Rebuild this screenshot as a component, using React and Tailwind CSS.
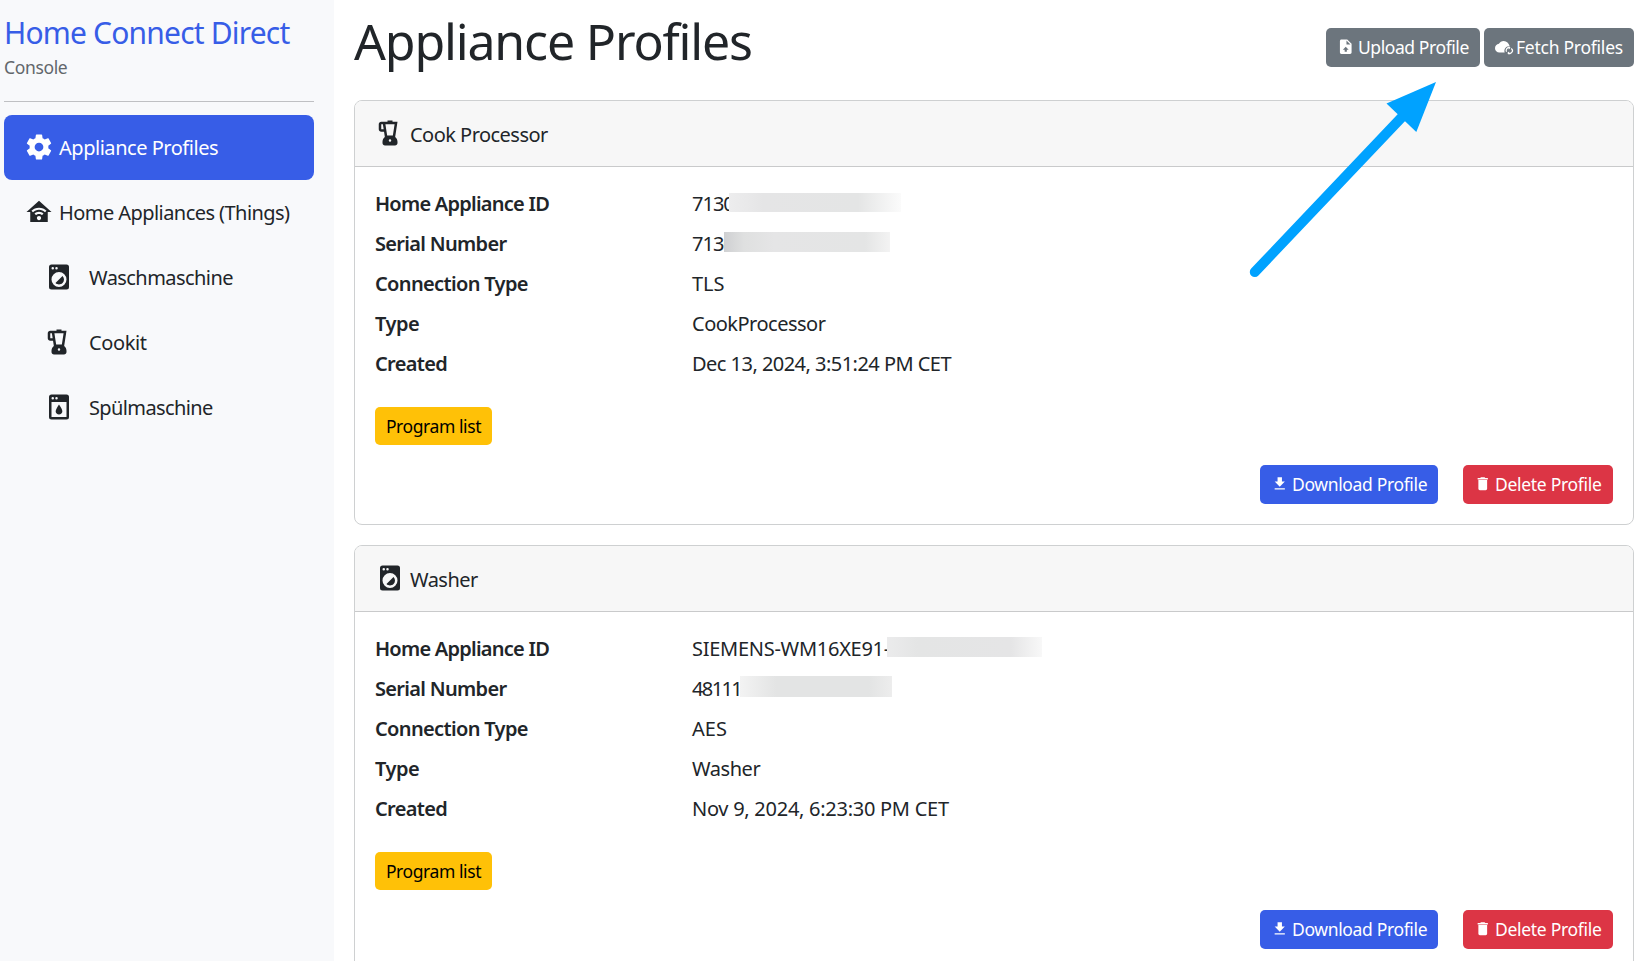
import React from "react";

const PATHS = {
  cog: "M12,15.5A3.5,3.5 0 0,1 8.5,12A3.5,3.5 0 0,1 12,8.5A3.5,3.5 0 0,1 15.5,12A3.5,3.5 0 0,1 12,15.5M19.43,12.97C19.47,12.65 19.5,12.33 19.5,12C19.5,11.67 19.47,11.34 19.43,11L21.54,9.37C21.73,9.22 21.78,8.95 21.66,8.73L19.66,5.27C19.54,5.05 19.27,4.96 19.05,5.05L16.56,6.05C16.04,5.66 15.5,5.32 14.87,5.07L14.5,2.42C14.46,2.18 14.25,2 14,2H10C9.75,2 9.54,2.18 9.5,2.42L9.13,5.07C8.5,5.32 7.96,5.66 7.44,6.05L4.95,5.05C4.73,4.96 4.46,5.05 4.34,5.27L2.34,8.73C2.21,8.95 2.27,9.22 2.46,9.37L4.57,11C4.53,11.34 4.5,11.67 4.5,12C4.5,12.33 4.53,12.65 4.57,12.97L2.46,14.63C2.27,14.78 2.21,15.05 2.34,15.27L4.34,18.73C4.46,18.95 4.73,19.03 4.95,18.95L7.44,17.94C7.96,18.34 8.5,18.68 9.13,18.93L9.5,21.58C9.54,21.82 9.75,22 10,22H14C14.25,22 14.46,21.82 14.5,21.58L14.87,18.93C15.5,18.67 16.04,18.34 16.56,17.94L19.05,18.95C19.27,19.03 19.54,18.95 19.66,18.73L21.66,15.27C21.78,15.05 21.73,14.78 21.54,14.63L19.43,12.97Z",
  home: "M12,3L2,12H5V20H19V12H22L12,3M12,8.5C14.34,8.5 16.46,9.43 18,10.94L16.8,12.12C15.58,10.91 13.88,10.17 12,10.17C10.12,10.17 8.42,10.91 7.2,12.12L6,10.94C7.54,9.43 9.66,8.5 12,8.5M12,11.83C13.4,11.83 14.67,12.39 15.6,13.3L14.4,14.47C13.79,13.87 12.94,13.5 12,13.5C11.06,13.5 10.2,13.87 9.6,14.47L8.4,13.3C9.33,12.39 10.6,11.83 12,11.83M12,15.17C12.94,15.17 13.7,15.91 13.7,16.83C13.7,17.75 12.94,18.5 12,18.5C11.06,18.5 10.3,17.75 10.3,16.83C10.3,15.91 11.06,15.17 12,15.17Z",
  washer: "M14.83,11.17C16.39,12.73 16.39,15.27 14.83,16.83C13.27,18.39 10.73,18.39 9.17,16.83L14.83,11.17M6,2H18A2,2 0 0,1 20,4V20A2,2 0 0,1 18,22H6A2,2 0 0,1 4,20V4A2,2 0 0,1 6,2M7,4A1,1 0 0,0 6,5A1,1 0 0,0 7,6A1,1 0 0,0 8,5A1,1 0 0,0 7,4M10,4A1,1 0 0,0 9,5A1,1 0 0,0 10,6A1,1 0 0,0 11,5A1,1 0 0,0 10,4M12,8A6,6 0 0,0 6,14A6,6 0 0,0 12,20A6,6 0 0,0 18,14A6,6 0 0,0 12,8Z",
  blender: "M16.13,15.13L18,3H14V2H10V3H5C3.9,3 3,3.9 3,5V9C3,10.1 3.9,11 5,11H7.23L7.87,15.13C6.74,16.05 6,17.43 6,19V20C6,21.1 6.9,22 8,22H16C17.1,22 18,21.1 18,20V19C18,17.43 17.26,15.95 16.13,15.13M5,9V5H6.31L6.93,9H5M12,19A1,1 0 0,1 11,18A1,1 0 0,1 12,17A1,1 0 0,1 13,18A1,1 0 0,1 12,19M14.29,14H9.72L8.33,5H15.67L14.29,14Z",
  dishwasher: "M18,2H6A2,2 0 0,0 4,4V20A2,2 0 0,0 6,22H18A2,2 0 0,0 20,20V4A2,2 0 0,0 18,2M10,4A1,1 0 0,1 11,5A1,1 0 0,1 10,6A1,1 0 0,1 9,5A1,1 0 0,1 10,4M7,4A1,1 0 0,1 8,5A1,1 0 0,1 7,6A1,1 0 0,1 6,5A1,1 0 0,1 7,4M18,20H6V8H18V20M14.67,15.33C14.69,16.03 14.41,16.71 13.91,17.21C12.86,18.26 11.15,18.27 10.09,17.21C9.59,16.71 9.31,16.03 9.33,15.33C9.4,14.62 9.63,13.94 10,13.33C10.37,12.5 10.81,11.73 11.33,11L12,10C13.79,12.59 14.67,14.36 14.67,15.33",
  download: "M5,20H19V18H5M19,9H15V3H9V9H5L12,16L19,9Z",
  trash: "M19,4H15.5L14.5,3H9.5L8.5,4H5V6H19M6,19A2,2 0 0,0 8,21H16A2,2 0 0,0 18,19V7H6V19Z",
  upload: "M14,2H6C4.89,2 4,2.89 4,4V20C4,21.11 4.89,22 6,22H18C19.11,22 20,21.11 20,20V8L14,2M13.5,16V19H10.5V16H8L12,12L16,16H13.5M13,9V3.5L18.5,9H13Z",
};

function Icon({ name, className }) {
  return (
    <svg viewBox="0 0 24 24" fill="currentColor" fillRule="evenodd" className={"shrink-0 " + className}>
      <path d={PATHS[name]} />
    </svg>
  );
}

function CloudSync() {
  return (
    <svg viewBox="0 0 24 24" className="mb-px h-[17.5px] w-[17.5px] shrink-0 overflow-visible">
      <path
        fill="currentColor"
        d="M12 4C9.1 4 6.6 5.6 5.4 8C2.3 8.400 0 10.900 0 14A6 6 0 0 0 6 20H13.300A6.500 6.500 0 0 1 20.200 11.200C19 7 16 4 12 4Z"
      />
      <g fill="none" stroke="currentColor" strokeWidth="1.700">
        <path d="M15.800 18.800A3.700 3.700 0 0 1 19.600 13.300M22.200 14.300A3.700 3.700 0 0 1 18.500 20.700" />
      </g>
      <path fill="currentColor" d="M18.800 11V15.600L21.300 13.300ZM19.300 18.400V23L16.800 20.700Z" />
    </svg>
  );
}

const NAV = [
  { icon: "cog", label: "Appliance Profiles", active: true, track: "tracking-[-0.465px]" },
  { icon: "home", label: "Home Appliances (Things)", track: "tracking-[-0.56px]" },
  { icon: "washer", label: "Waschmaschine", sub: true, track: "tracking-[-0.56px]" },
  { icon: "blender", label: "Cookit", sub: true, track: "tracking-[-0.4px]" },
  { icon: "dishwasher", label: "Spülmaschine", sub: true, track: "tracking-[-0.62px]" },
];

const PROFILES = [
  {
    icon: "blender",
    title: "Cook Processor",
    rows: [
      {
        v: "7130",
        track: "tracking-[-1px]",
        mask: "left-[37px] top-[10px] w-[172px] h-[19px] bg-[linear-gradient(90deg,#ededee_0%,#e5e5e6_20%,#e4e5e5_75%,#fbfbfb_100%)]",
      },
      {
        v: "7130",
        track: "tracking-[-1px]",
        mask: "left-[32px] top-[9px] w-[166px] h-5 bg-[linear-gradient(90deg,#cfd0d2_0%,#dfe0e0_12%,#e5e5e6_30%,#e4e5e5_85%,#f3f3f3_100%)]",
      },
      { v: "TLS", track: "tracking-[-0.1px]" },
      { v: "CookProcessor", track: "tracking-[-0.5px]" },
      { v: "Dec 13, 2024, 3:51:24 PM CET", track: "tracking-[-0.53px]" },
    ],
  },
  {
    icon: "washer",
    title: "Washer",
    rows: [
      {
        v: "SIEMENS-WM16XE91-",
        track: "tracking-[-0.27px]",
        mask: "left-[195px] top-[9px] w-[155px] h-5 bg-[linear-gradient(90deg,#ebebec_0%,#e4e5e5_20%,#e5e5e6_80%,#f8f8f8_100%)]",
      },
      {
        v: "48111",
        track: "tracking-[-1.6px]",
        mask: "left-[48px] top-[8px] w-[152px] h-[21px] bg-[linear-gradient(90deg,#f3f3f3_0%,#e3e4e4_24%,#e3e4e4_85%,#ededed_100%)]",
      },
      { v: "AES", track: "tracking-[0px]" },
      { v: "Washer", track: "tracking-[-0.45px]" },
      { v: "Nov 9, 2024, 6:23:30 PM CET", track: "tracking-[-0.27px]" },
    ],
  },
];

const LABELS = [
  ["Home Appliance ID", "tracking-[-0.75px]"],
  ["Serial Number", "tracking-[-0.68px]"],
  ["Connection Type", "tracking-[-0.65px]"],
  ["Type", "tracking-[-0.5px]"],
  ["Created", "tracking-[-0.65px]"],
];

function Button({ className, children }) {
  return (
    <button
      className={
        "flex h-[39px] items-center gap-[3.5px] whitespace-nowrap rounded-[5px] pl-[11px] text-[17.5px] leading-[26px] text-white " +
        className
      }
    >
      {children}
    </button>
  );
}

function ProfileCard({ profile }) {
  return (
    <section className="h-[425px] shrink-0 rounded-[8px] border border-[#ced0d1] bg-white">
      <header className="flex h-[66px] items-center gap-[5px] rounded-t-[7px] border-b border-[#c9cacb] bg-[#f7f7f7] pl-5">
        <Icon name={profile.icon} className="mb-[2px] h-[30px] w-[30px]" />
        <span className="pt-[3px] tracking-[-0.53px]">{profile.title}</span>
      </header>
      <div className="px-5 pt-4">
        <dl>
          {profile.rows.map((row, i) => (
            <div key={LABELS[i][0]} className="flex h-10 items-center">
              <dt className={"w-[317px] pt-px font-semibold " + LABELS[i][1]}>{LABELS[i][0]}</dt>
              <dd className="relative flex h-10 items-center">
                <span className={"whitespace-nowrap pt-px " + row.track}>{row.v}</span>
                {row.mask && <span className={"absolute " + row.mask} />}
              </dd>
            </div>
          ))}
        </dl>
        <button className="mt-6 flex h-[38px] w-[117px] items-center justify-center rounded-[5px] bg-[#ffc107] text-[17.5px] tracking-[-0.41px] text-black">
          Program list
        </button>
        <div className="mt-5 flex justify-end gap-[25px]">
          <Button className="w-[178px] bg-[#375de7]">
            <Icon name="download" className="mb-px h-[17.5px] w-[17.5px]" />
            <span className="pb-[2px] tracking-[-0.35px]">Download Profile</span>
          </Button>
          <Button className="w-[150px] bg-[#dc3545]">
            <Icon name="trash" className="mb-px h-[17.5px] w-[17.5px]" />
            <span className="pb-[2px] tracking-[-0.3px]">Delete Profile</span>
          </Button>
        </div>
      </div>
    </section>
  );
}

export default function App() {
  return (
    <div className="relative flex h-[961px] w-[1644px] overflow-hidden bg-white font-['Noto_Sans',sans-serif] text-[20px] leading-[30px] text-[#212529]">
      <aside className="w-[334px] shrink-0 bg-[#f8f9fb] pl-1 pr-5">
        <div className="whitespace-nowrap pt-[15px] text-[30px] leading-[36px] tracking-[-0.81px] text-[#375de7]">
          Home Connect Direct
        </div>
        <div className="mt-[3px] text-[17.5px] leading-[26px] tracking-[-0.35px] text-[#62676b]">Console</div>
        <hr className="mt-[21px] border-0 border-t border-[#bfc0c3]" />
        <nav className="mt-[13px]">
          {NAV.map((n) => (
            <div
              key={n.label}
              className={
                "flex h-[65px] items-center rounded-[8px] " +
                (n.sub ? "gap-[15px] pl-10 " : "gap-[5px] pl-5 ") +
                (n.active ? "bg-[#375de7] text-white" : "")
              }
            >
              <Icon name={n.icon} className="mb-[2px] h-[30px] w-[30px]" />
              <span className={"whitespace-nowrap pt-px " + n.track}>{n.label}</span>
            </div>
          ))}
        </nav>
      </aside>

      <main className="w-[1310px] shrink-0 pl-5 pr-[10px]">
        <div className="flex h-[100px] items-start justify-between">
          <h1 className="pt-[11px] text-[50px] leading-[60px] tracking-[-1.16px]">Appliance Profiles</h1>
          <div className="flex gap-1 pt-7">
            <Button className="w-[154px] bg-[#6c757d]">
              <Icon name="upload" className="mb-px h-[17.5px] w-[17.5px]" />
              <span className="pb-[2px] tracking-[-0.42px]">Upload Profile</span>
            </Button>
            <Button className="w-[150px] bg-[#6c757d]">
              <CloudSync />
              <span className="pb-[2px] tracking-[-0.25px]">Fetch Profiles</span>
            </Button>
          </div>
        </div>
        <div className="flex flex-col gap-5">
          {PROFILES.map((p) => (
            <ProfileCard key={p.title} profile={p} />
          ))}
        </div>
      </main>

      <svg viewBox="0 0 200 210" className="absolute left-[1240px] top-[75px] h-[210px] w-[200px]">
        <path d="M14.800 197L162 42" stroke="#00a2ff" strokeWidth="10" strokeLinecap="round" />
        <path d="M196 7L146.500 28.500L176.300 57Z" fill="#00a2ff" />
      </svg>
    </div>
  );
}
